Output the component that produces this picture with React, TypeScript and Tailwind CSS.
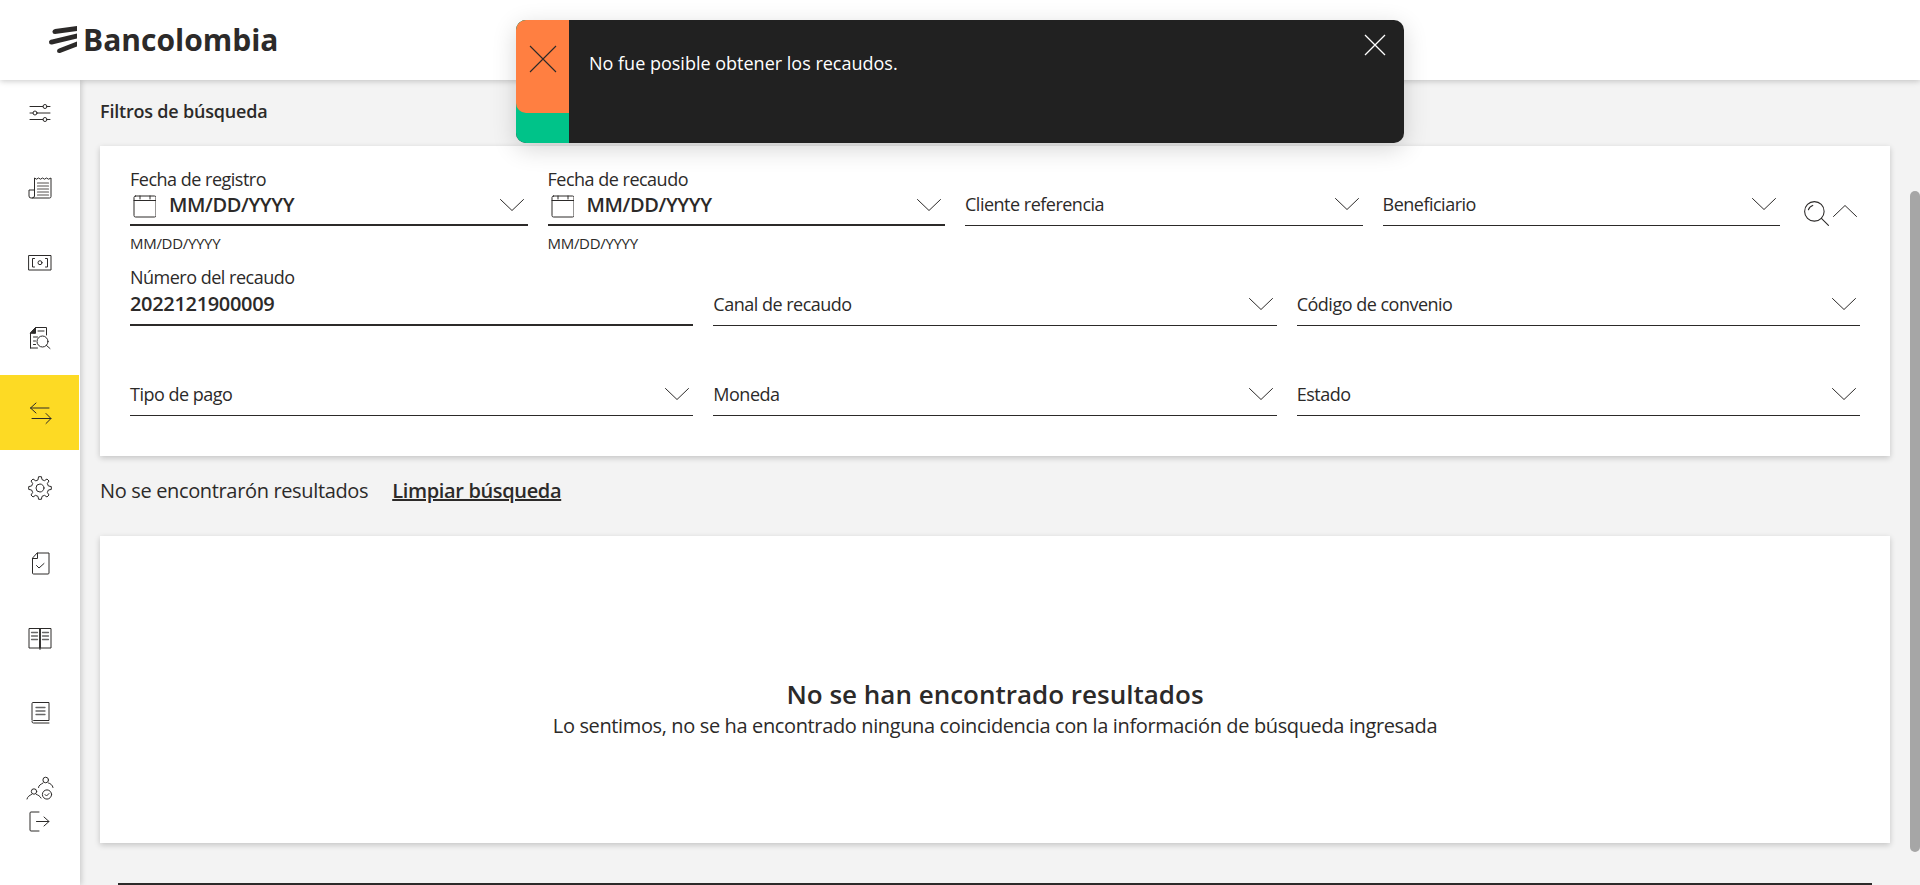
import { ReactNode } from "react";

const ink = "#2c2a29";

function Icon({ children, size = 24, className = "" }: { children: ReactNode; size?: number; className?: string }) {
    return (
        <svg width={size} height={size} viewBox="0 0 24 24" fill="none" stroke={ink} strokeWidth="1" strokeLinecap="round" strokeLinejoin="round" overflow="visible" className={className}>
            {children}
        </svg>
    );
}

const Chevron = ({ up = false }: { up?: boolean }) => (
    <svg width="24" height="12" viewBox="0 0 24 12" fill="none" stroke={ink} strokeWidth="1" strokeLinecap="round" strokeLinejoin="round">
        <path d={up ? "M0.5 11.5 L12 0.5 L23.5 11.5" : "M0.5 0.5 L12 11.5 L23.5 0.5"} />
    </svg>
);

const Calendar = () => (
    <svg width="26" height="26" viewBox="0 0 26 26" fill="none" stroke={ink} strokeWidth="1" strokeLinecap="round" strokeLinejoin="round">
        <rect x="4" y="4" width="22" height="21" rx="1.5" />
        <path d="M4 8.500h22M10 4v3M20 4v3" />
    </svg>
);

// 8 lobed gear outline around the centre of the 24 box
function gearPath() {
    const pts: string[] = [];
    const teeth = 8;
    for (let i = 0; i < teeth; i++) {
        const a = (i / teeth) * Math.PI * 2 - Math.PI / 2;
        const step = (Math.PI * 2) / teeth;
        const at = (r: number, t: number) => `${(12 + r * Math.cos(t)).toFixed(2)} ${(12 + r * Math.sin(t)).toFixed(2)}`;
        pts.push(`${i === 0 ? "M" : "L"}${at(8.6, a - step * 0.3)}`);
        pts.push(`L${at(11.4, a - step * 0.16)}`);
        pts.push(`L${at(11.4, a + step * 0.16)}`);
        pts.push(`L${at(8.6, a + step * 0.3)}`);
    }
    return pts.join(" ") + "Z";
}

const navIcons: ReactNode[] = [
    <Icon key="filters"><path d="M2 5.5h13M19 5.500h3M2 12h3M9 12h13M2 18.500h13M19 18.500h3" /><circle cx="17" cy="5.500" r="2" /><circle cx="7" cy="12" r="2" /><circle cx="17" cy="18.500" r="2" /></Icon>,
    <Icon key="receipt"><path d="M6.500 20V2l2 1.200L10.500 2l2 1.200L14.500 2l2 1.200L18.500 2l2 1.200L23 2v18.500a1.500 1.500 0 0 1-1.500 1.500H3a2 2 0 0 1-2-2v-6h5.500" /><path d="M6.500 20a2 2 0 0 1-2 2" /><path d="M9.500 7h11M9.500 10h11M9.500 13h11M9.500 16h11M9.500 19h11" stroke="#55504e" strokeWidth="1.200" /></Icon>,
    <Icon key="money"><rect x="1" y="4.500" width="22" height="14.500" /><path d="M6.500 7.500H4.500v8.500h2M17.500 7.500h2v8.500h-2" /><circle cx="12" cy="11.700" r="2" /></Icon>,
    <Icon key="search-doc"><path d="M2.500 22V7l5-5.500h11V9" /><path d="M2.500 7l5-5.500V7z" fill={ink} /><path d="M2.500 22h7M5.500 11h4M5.500 15h2M5.500 18.500h2M10 5h6" /><circle cx="14.500" cy="15.500" r="5.500" /><path d="M18.500 19.500l3.500 3" /></Icon>,
    <Icon key="transfer"><path d="M21 7H2.500M8 2L2.500 7 8 12M4 17.500h19M18 12.500l5 5-5 5" /></Icon>,
    <Icon key="gear"><circle cx="12" cy="12" r="4" /><path d={gearPath()} /></Icon>,
    <Icon key="doc-check"><path d="M9.500 2H21v20a1 1 0 0 1-1 1H5.500a1 1 0 0 1-1-1V7.500z" /><path d="M9.500 2v5.500h-5M8.500 14.500l2.500 2.500 5-4.500" /></Icon>,
    <Icon key="book"><path d="M12 22H1V2.500h11zM12 22h11V2.500H12zM12 2.500V23.500" /><path d="M3.500 6.500h6M3.500 10h6M3.500 13.500h6M14.500 6.500h6M14.500 10h6M14.500 13.500h6" stroke="#666" strokeWidth="1.300" /></Icon>,
    <Icon key="manual"><path d="M4 19V2.500a1 1 0 0 1 1-1h16v18H5.500A1.800 1.800 0 0 0 4 20.500 1.500 1.500 0 0 0 5.500 22h15.500" /><path d="M8 6.500h9M8 10h9M8 13.500h9" stroke="#666" strokeWidth="1.300" /></Icon>,
    <Icon key="users"><circle cx="17.700" cy="4" r="2.800" /><path d="M10.500 11.500c0-2.500 2.500-3 4.500-4.500M20.500 7c2 .5 4 2 4.500 4.500" /><circle cx="6" cy="15.500" r="2.700" /><path d="M-1 23c.5-2.500 2.500-3.500 4.500-4.500M8.500 18.500c1.500.5 3.500 1.500 4.500 3.500" /><circle cx="19" cy="18.500" r="4.600" /><path d="M17 18.500l1.500 1.500 2.500-2.500" /></Icon>,
];

function Select({ label }: { label: string }) {
    return (
        <div className="flex h-[58px] min-w-0 flex-1 items-end border-b border-[#2c2a29] pb-[7px]">
            <span className="flex-1 text-lg leading-[28px] tracking-[-0.5px]">{label}</span>
            <span className="mb-[2px] flex h-6 items-center pr-1"><Chevron /></span>
        </div>
    );
}

function DateField({ label }: { label: string }) {
    return (
        <div className="min-w-0 flex-1">
            <div className="flex h-[58px] flex-col border-b-2 border-[#2c2a29]">
                <span className="text-lg leading-[22px] tracking-[-0.5px]">{label}</span>
                <div className="mt-[2px] flex items-center">
                    <Calendar />
                    <span className="ml-[13px] flex-1 text-xl font-semibold leading-[26px] tracking-[-0.4px]">MM/DD/YYYY</span>
                    <span className="pr-1"><Chevron /></span>
                </div>
            </div>
            <div className="mt-[7px] text-[15px] leading-[20px] tracking-[-0.3px]">MM/DD/YYYY</div>
        </div>
    );
}

export default function App() {
    return (
        <div className="relative flex h-[885px] flex-col overflow-hidden bg-[#f3f3f3] text-[#2c2a29]" style={{ fontFamily: '"Open Sans", sans-serif' }}>
            <header className="relative z-20 flex h-20 shrink-0 items-center bg-white pl-[49px] shadow-[0_1px_6px_rgba(0,0,0,0.22)]">
                <svg width="28" height="28" viewBox="0 0 28 28" fill={ink}>
                    <path d="M6 3 L28 0 V5 L6 8 Q3.500 8 3.500 5.500 Q3.500 3.500 6 3z" />
                    <path d="M3 13.500 L28 7.500 V12.500 L3 18.500 Q0 19 0 16 Q0 14 3 13.500z" />
                    <path d="M10 22.500 L28 15.500 V20.500 L11 27 Q8 27.500 8 25 Q8 23 10 22.500z" />
                </svg>
                <span className="ml-[6px] text-[30px] font-bold leading-none">Bancolombia</span>
            </header>

            <div className="flex min-h-0 flex-1">
                <aside className="relative z-10 flex w-20 shrink-0 flex-col items-stretch bg-white shadow-[1px_0_6px_rgba(0,0,0,0.2)]">
                    <div className="-mt-[5px]">
                        {navIcons.map((icon, i) => (
                            <div key={i} className={`flex h-[75px] items-center justify-center ${i === 4 ? "mr-px bg-[#fdda24]" : ""}`}>
                                {icon}
                            </div>
                        ))}
                    </div>
                    <div className="-mt-4 flex justify-center">
                        <Icon><path d="M11 3H3a1 1 0 0 0-1 1v17a1 1 0 0 0 1 1h8M8.500 12.500H21M16 8l5 4.500-5 4.500" /></Icon>
                    </div>
                </aside>

                <main className="min-w-0 flex-1 pl-5 pr-[30px] pt-5">
                    <h2 className="text-lg font-semibold leading-[22px] tracking-[-0.2px]">Filtros de búsqueda</h2>

                    <section className="mt-6 h-[310px] bg-white px-[30px] pt-[22px] shadow-[0_2px_6px_rgba(0,0,0,0.2)]">
                        <div className="flex items-start gap-5">
                            <DateField label="Fecha de registro" />
                            <DateField label="Fecha de recaudo" />
                            <Select label="Cliente referencia" />
                            <Select label="Beneficiario" />
                            <div className="flex h-[58px] w-[60px] shrink-0 items-start justify-between pl-[3px] pr-[3px] pt-[32px]">
                                <Icon size={26}><circle cx="10.500" cy="10.500" r="9" /><path d="M17 17l6.500 6.500M5 9a6 6 0 0 1 4-4" /></Icon>
                                <span className="pt-[5px]"><Chevron up /></span>
                            </div>
                        </div>

                        <div className="mt-[13px] flex items-end gap-5">
                            <div className="flex h-[60px] min-w-0 flex-1 flex-col border-b-2 border-[#2c2a29]">
                                <span className="text-lg leading-[22px] tracking-[-0.5px]">Número del recaudo</span>
                                <span className="mt-[3px] text-xl font-semibold leading-[26px] tracking-[-0.33px]">2022121900009</span>
                            </div>
                            <Select label="Canal de recaudo" />
                            <Select label="Código de convenio" />
                        </div>

                        <div className="mt-8 flex gap-5">
                            <Select label="Tipo de pago" />
                            <Select label="Moneda" />
                            <Select label="Estado" />
                        </div>
                    </section>

                    <div className="mt-[21px] flex h-7 items-center text-xl leading-7 tracking-[-0.35px]">
                        <span>No se encontrarón resultados</span>
                        <a className="ml-6 font-semibold underline">Limpiar búsqueda</a>
                    </div>

                    <section className="mt-[31px] flex h-[307px] flex-col items-center bg-white pt-[143px] shadow-[0_2px_6px_rgba(0,0,0,0.2)]">
                        <h1 className="text-[26px] font-semibold leading-[30px]">No se han encontrado resultados</h1>
                        <p className="mt-[2px] text-xl leading-[30px] tracking-[-0.37px]">Lo sentimos, no se ha encontrado ninguna coincidencia con la información de búsqueda ingresada</p>
                    </section>

                    <div className="mx-[18px] mt-10 h-[2px] bg-[#2c2a29]" />
                </main>
            </div>

            {/* scrollbar thumb */}
            <div className="absolute right-0 top-[191px] z-10 h-[661px] w-[10px] rounded-[5px] bg-[#a6a6a6]" />

            {/* toast */}
            <div className="absolute left-[516px] top-5 z-30 flex h-[123px] w-[888px] overflow-hidden rounded-[10px] bg-[#212121] shadow-[0_6px_24px_rgba(0,0,0,0.16)]">
                <div className="w-[53px] shrink-0 bg-[#00c389]">
                    <div className="flex h-[93px] items-start justify-center rounded-bl-[10px] bg-[#ff7f41] pt-[24px]">
                        <svg width="30" height="30" viewBox="0 0 30 30" fill="none" stroke={ink} strokeWidth="1.100"><path d="M2 2l26 26M28 2L2 28" /></svg>
                    </div>
                </div>
                <p className="ml-5 mt-[31px] flex-1 text-lg leading-[24px] text-white">No fue posible obtener los recaudos.</p>
                <svg className="mr-[18px] mt-[14px]" width="22" height="22" viewBox="0 0 22 22" fill="none" stroke="#fff" strokeWidth="1.300"><path d="M1 1l20 20M21 1L1 21" /></svg>
            </div>
        </div>
    );
}
